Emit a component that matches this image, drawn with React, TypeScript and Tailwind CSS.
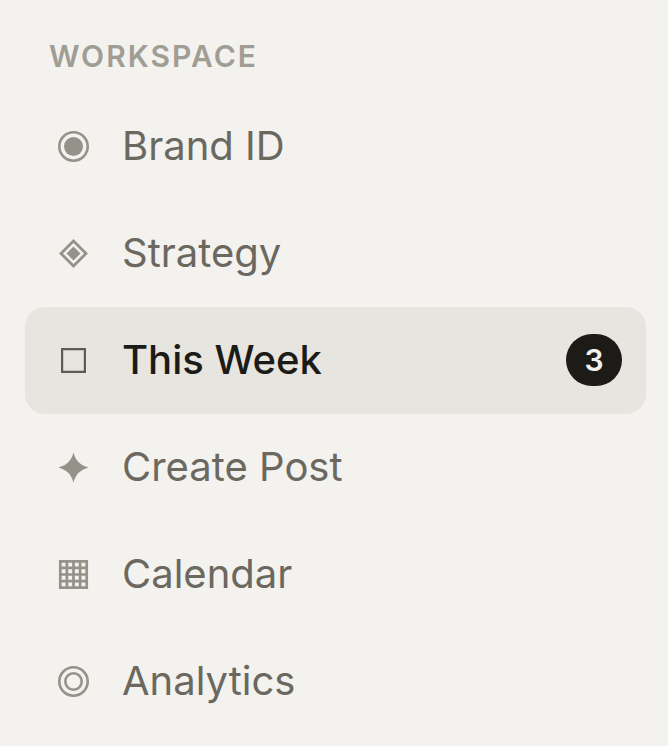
import type { ReactNode } from 'react';

const icons: Record<string, ReactNode> = {
  brand: (
    <>
      <circle cx="16" cy="16" r="14.2" fill="none" stroke="currentColor" strokeWidth="2.6" />
      <circle cx="16" cy="16" r="9.5" fill="currentColor" />
    </>
  ),
  strategy: (
    <>
      <path d="M16 3.5 28.5 16 16 28.5 3.5 16Z" fill="none" stroke="currentColor" strokeWidth="2.8" />
      <path d="M16 9 23 16 16 23 9 16Z" fill="currentColor" />
    </>
  ),
  week: <path d="M4.6 4.6H27.4V27.4H4.6Z" fill="none" stroke="currentColor" strokeWidth="2.2" />,
  create: (
    <path
      d="M16 1C18 8 21 13 31 16C21 19 18 24 16 31C14 24 11 19 1 16C11 13 14 8 16 1Z"
      fill="currentColor"
    />
  ),
  calendar: (
    <path
      d="M2.8 2.8H29.2V29.2H2.8ZM9.4 2V30M16 2V30M22.6 2V30M2 9.4H30M2 16H30M2 22.6H30"
      fill="none"
      stroke="currentColor"
      strokeWidth="2.7"
    />
  ),
  analytics: (
    <g fill="none" stroke="currentColor" strokeWidth="2.6">
      <circle cx="16" cy="16" r="14.2" />
      <circle cx="16" cy="16" r="8.2" />
    </g>
  ),
};

type Item = { id: string; label: string; active?: boolean; count?: number };

const items: Item[] = [
  { id: 'brand', label: 'Brand ID' },
  { id: 'strategy', label: 'Strategy' },
  { id: 'week', label: 'This Week', active: true, count: 3 },
  { id: 'create', label: 'Create Post' },
  { id: 'calendar', label: 'Calendar' },
  { id: 'analytics', label: 'Analytics' },
];

function NavItem({ id, label, active, count }: Item) {
  return (
    <li>
      <button
        type="button"
        aria-current={active ? 'page' : undefined}
        className={`flex h-[107px] w-full items-center rounded-[20px] pr-6 pb-px pl-8 text-left ${
          active ? 'bg-[#e6e5e0] font-medium text-[#1c1b17]' : 'text-[#6b685f]'
        }`}
      >
        <svg
          viewBox="-0.5 -0.5 32 32"
          aria-hidden="true"
          className={`mr-[33px] size-8 shrink-0 ${active ? 'text-[#5d5b54]' : 'text-[#95928a]'}`}
        >
          {icons[id]}
        </svg>
        <span className="flex-1 text-[40px] leading-[52px]">{label}</span>
        {count !== undefined && (
          <span className="flex h-[52px] w-14 items-center justify-center rounded-[26px] bg-[#1c1b17] text-[30px] font-semibold text-[#f3f2ee]">
            {count}
          </span>
        )}
      </button>
    </li>
  );
}

export default function App() {
  return (
    <nav
      aria-label="Workspace"
      className="min-h-screen bg-[#f3f2ee] pt-9 pr-[22px] pl-[25px] font-['Inter',sans-serif]"
    >
      <h2 className="mb-4 pl-6 text-[30px] leading-[41px] font-semibold tracking-[2px] text-[#a09d95]">
        WORKSPACE
      </h2>
      <ul>
        {items.map((item) => (
          <NavItem key={item.id} {...item} />
        ))}
      </ul>
    </nav>
  );
}
